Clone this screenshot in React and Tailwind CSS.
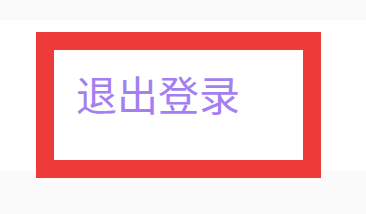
export default function App() {
  return (
    <div className="w-[366px] h-[214px] bg-[#fafafa] flex flex-col overflow-hidden" style={{ fontFamily: '"Noto Sans CJK SC", "Noto Sans", sans-serif' }}>
      <div className="h-[20px] shrink-0" />
      <div className="h-[150px] shrink-0 bg-white pl-[36px] pt-[12px]">
        <div className="w-[285px] h-[146px] border-[18px] border-[#ef3a3a] bg-white pl-[22px] pt-[23px]">
          <span className="block text-[41px] leading-[41px] text-[#a37ff0]">退出登录</span>
        </div>
      </div>
    </div>
  );
}
